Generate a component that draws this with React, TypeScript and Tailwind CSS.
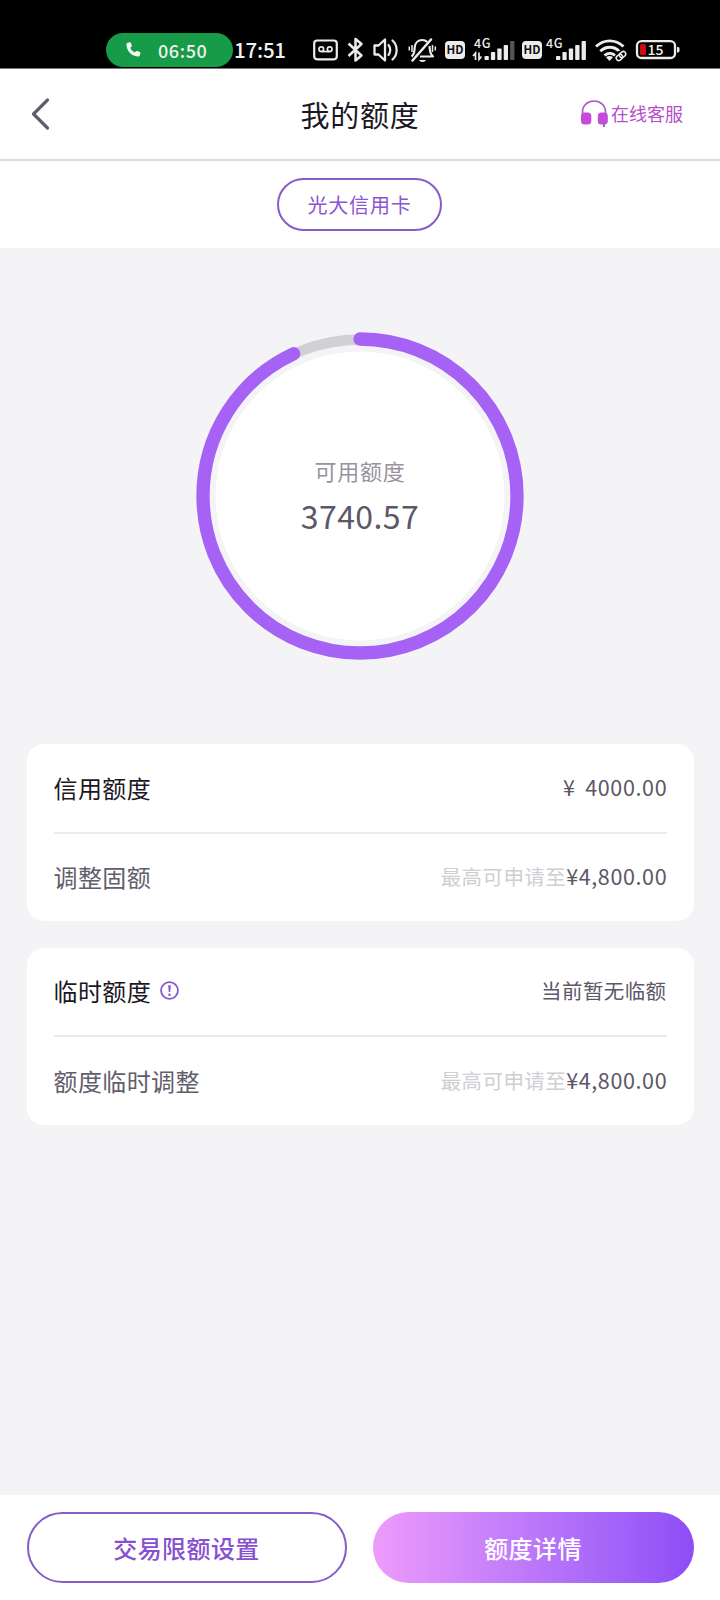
import type { ReactNode } from "react";

function StatusIcon({ x, width, children }: { x: number; width: number; children: ReactNode }) {
  return (
    <svg
      width={width}
      height={34}
      viewBox={`${x} 33 ${width} 34`}
      fill="none"
      stroke="#ececec"
      className="shrink-0"
    >
      {children}
    </svg>
  );
}

function HdBadge({ x }: { x: number }) {
  return (
    <g stroke="none">
      <rect x={x} y={41} width={20} height={18} rx={4} fill="#ececec" />
      <text x={x + 10} y={54.3} fontSize={11.5} fontWeight={700} textAnchor="middle" fill="#111111">
        HD
      </text>
    </g>
  );
}

function Bars({ x, dimLast = false }: { x: number; dimLast?: boolean }) {
  return (
    <g stroke="none">
      {[4, 8, 11.5, 15, 19].map((h, i) => (
        <rect
          key={h}
          x={x + i * 6.4}
          y={60 - h}
          width={4.3}
          height={h}
          rx={0.8}
          fill={dimLast && i === 4 ? "#555555" : "#ececec"}
        />
      ))}
    </g>
  );
}

function StatusBar() {
  return (
    <div className="flex h-[69px] shrink-0 items-start border-b border-[#777] bg-black pt-[33px] pl-[106px] font-['Noto_Sans_CJK_SC','Noto_Sans',sans-serif] text-[#f0f0f0]">
      <div className="flex h-[34px] w-[127px] shrink-0 items-center rounded-full bg-[#169b49]">
        <svg width="15" height="16" viewBox="0 0 14 15" className="ml-[20px]" fill="#f4fff8">
          <path d="M1.2 1 3.3.2c.5-.2 1 .1 1.2.6l.9 2.6c.1.4 0 .8-.3 1L3.9 5.5c.8 1.900 2.200 3.400 4.200 4.400l1.200-1.200c.3-.3.7-.4 1.100-.3l2.500 1c.5.2.800.700.6 1.200l-.8 2.400c-.1.400-.5.700-.9.700C5.300 13.700.2 8.300.4 1.900c0-.4.3-.7.8-.9Z" />
        </svg>
        <span className="ml-[17px] text-[18px] leading-[32px] font-medium tracking-[0.6px] whitespace-nowrap">
          <span className="block -mt-[1px]">06:50</span>
        </span>
      </div>
      <span className="ml-[1px] w-[76px] shrink-0 text-[20.5px] leading-[33px] font-medium tracking-[-0.2px] whitespace-nowrap">
        17:51
      </span>
      <StatusIcon x={310} width={33}>
        <rect x={314.200} y={40.500} width={22.600} height={18.800} rx={3} strokeWidth={2.200} />
        <circle cx={321.300} cy={49.200} r={2.300} strokeWidth={1.700} />
        <circle cx={329.700} cy={49.200} r={2.300} strokeWidth={1.700} />
        <path d="M321.300 51.600h8.400" strokeWidth={1.600} />
      </StatusIcon>
      <StatusIcon x={343} width={26}>
        <path d="m348.500 43.500 13 12-6 5V39l6 5-13 12" strokeWidth={2.500} strokeLinejoin="round" />
      </StatusIcon>
      <StatusIcon x={369} width={34}>
        <path d="M374.500 45.500h4l6.500-6v21l-6.500-6h-4Z" strokeWidth={2.300} strokeLinejoin="round" />
        <path d="M388.500 45c2.300 2.600 2.300 7.400 0 10M392.500 40.500c5.500 5 5.500 14 0 19" strokeWidth={2.200} strokeLinecap="round" />
      </StatusIcon>
      <StatusIcon x={403} width={39}>
        <path d="M411.500 56.500c3-2 3-5 3.200-9 .4-4.500 3.500-7.500 7.500-7.500 2 0 3.800.7 5 2M429.500 46c.2 4.500.5 8.500 3.500 10.500h-13" strokeWidth={2.200} strokeLinejoin="round" />
        <path d="m412.500 60.500 18.500-21" strokeWidth={2.500} strokeLinecap="round" />
        <path d="M419 60h7c-1 2.500-6 2.500-7 0Z" fill="#ececec" stroke="none" />
        <path d="M409.300 46.500v4M412 45v7M432.500 45v7M435.300 46.500v4" strokeWidth={1.500} />
      </StatusIcon>
      <StatusIcon x={442} width={28}>
        <HdBadge x={445} />
      </StatusIcon>
      <StatusIcon x={470} width={48}>
        <text x={474} y={48} fontSize={12.500} fontWeight={500} letterSpacing={0.600} fill="#ececec" stroke="none">4G</text>
        <path d="M475.500 60v-7l-2.500 3M479 52.500v7l2.500-3" strokeWidth={1.700} />
        <Bars x={484.500} dimLast />
      </StatusIcon>
      <StatusIcon x={518} width={26}>
        <HdBadge x={522} />
      </StatusIcon>
      <StatusIcon x={544} width={46}>
        <text x={546} y={48} fontSize={12.500} fontWeight={500} letterSpacing={0.600} fill="#ececec" stroke="none">4G</text>
        <Bars x={556} />
      </StatusIcon>
      <StatusIcon x={590} width={42}>
        <path d="M596 46.500c8-7.500 19.500-7.500 27.500 0M600.300 51.200c5.500-5.200 13.500-5.200 19 0M604.500 55.500c3.200-2.700 7.400-2.700 10.600 0" strokeWidth={2.900} />
        <path d="m606 57.300 3.500 3.700 3.500-3.700c-2-1.700-5-1.700-7 0Z" fill="#ececec" stroke="none" />
        <circle cx={621} cy={56} r={5.500} fill="#000000" stroke="none" />
        <g strokeWidth={1.500} transform="rotate(-42 621 56)">
          <rect x={615.500} y={53.500} width={6.800} height={5} rx={2.500} />
          <rect x={619.700} y={53.500} width={6.800} height={5} rx={2.500} />
        </g>
      </StatusIcon>
      <StatusIcon x={632} width={50}>
        <rect x={637} y={41.200} width={38} height={16.800} rx={4.500} strokeWidth={2.300} />
        <rect x={640} y={44} width={6} height={11} rx={1.500} fill="#c80d12" stroke="none" />
        <path d="M677 47h.8c1 0 1.700.7 1.700 1.700v2c0 1-.7 1.700-1.700 1.700h-.8Z" fill="#ececec" stroke="none" />
        <text x={655.500} y={54.700} fontSize={14} fontWeight={500} textAnchor="middle" fill="#f0f0f0" stroke="none">15</text>
      </StatusIcon>
    </div>
  );
}

function Header() {
  return (
    <header className="grid h-[92px] shrink-0 grid-cols-3 items-center border-b-2 border-[#dadada] bg-white">
      <svg width="20" height="34" viewBox="0 0 20 34" fill="none" className="ml-[30px]">
        <path d="M17.500 3 3.500 17l14 14" stroke="#625d6b" strokeWidth="3.200" strokeLinecap="round" strokeLinejoin="round" />
      </svg>
      <h1 className="text-center text-[29px] leading-[44px] tracking-[0.8px] text-[#1b1724]">我的额度</h1>
      <div className="flex items-center justify-end pr-[37px] pb-[2px] text-[#b44fc8]">
        <svg width="28" height="28" viewBox="0 0 28 28" className="mr-[3px]" fill="#c54bdd">
          <path d="M2.500 15v-2C2.500 6.500 7.500 2 14 2s11.500 4.500 11.500 11v2" fill="none" stroke="#a85cc0" strokeWidth="1.600" />
          <rect x="1" y="13.500" width="10.300" height="12" rx="3.500" />
          <rect x="17.800" y="13.500" width="10" height="12" rx="3.500" />
          <path d="M23 24h2v4h-2Z" fill="#a85cc0" />
        </svg>
        <span className="text-[18px] leading-[28px] whitespace-nowrap">在线客服</span>
      </div>
    </header>
  );
}

function LimitRing() {
  return (
    <div className="grid h-[496px] shrink-0 place-items-center">
      <svg width="330" height="330" viewBox="0 0 330 330" fill="none" className="col-start-1 row-start-1">
        <circle cx="165" cy="165" r="144.500" fill="#ffffff" />
        <circle cx="165" cy="165" r="156.500" stroke="#d2d0d6" strokeWidth="10.500" />
        <circle
          cx="165"
          cy="165"
          r="157"
          stroke="#a661f5"
          strokeWidth="13.300"
          strokeLinecap="round"
          pathLength="360"
          strokeDasharray="335 25"
          transform="rotate(-90 165 165)"
        />
      </svg>
      <div className="z-10 col-start-1 row-start-1 flex flex-col items-center pb-[4px]">
        <span className="text-[22px] leading-[34px] tracking-[0.7px] text-[#97949e]">可用额度</span>
        <span className="mt-[7px] text-[32px] leading-[42px] tracking-[0.400px] text-[#5d5768]">3740.57</span>
      </div>
    </div>
  );
}

function Hint() {
  return (
    <>
      <span className="text-[20.500px] tracking-[0.400px] text-[#d0ced3]">最高可申请至</span>
      <Amount>¥4,800.00</Amount>
    </>
  );
}

function Amount({ children }: { children: ReactNode }) {
  return <span className="-mr-[0.700px] text-[21.500px] tracking-[0.620px]">{children}</span>;
}

function Row({ label, value, strong = false }: { label: ReactNode; value: ReactNode; strong?: boolean }) {
  return (
    <div className="flex flex-1 items-center justify-between">
      <div className={strong ? "flex items-center text-[#1b1724]" : "flex items-center text-[#625d6b]"}>{label}</div>
      <div className="pb-[2px] text-[20.500px] leading-[32px] whitespace-nowrap text-[#5d5768]">{value}</div>
    </div>
  );
}

function Card({ children }: { children: ReactNode }) {
  return (
    <section className="flex h-[177px] flex-col rounded-[17px] bg-white px-[27px] text-[24px] leading-[36px] tracking-[0.400px]">
      {children}
    </section>
  );
}

export default function App() {
  return (
    <div className="flex h-[1600px] w-[720px] flex-col overflow-hidden bg-[#f4f4f6] font-['Noto_Sans_CJK_SC',sans-serif]">
      <StatusBar />
      <Header />
      <div className="flex h-[87px] shrink-0 items-start justify-center bg-white pt-[17px] pr-[1px]">
        <button className="h-[53px] w-[165px] rounded-full border-2 border-[#875bc8] text-[20px] leading-[48px] tracking-[0.800px] text-[#8a56d2]">
          光大信用卡
        </button>
      </div>
      <LimitRing />
      <main className="flex flex-1 flex-col gap-[26.500px] px-[26.500px]">
        <Card>
          <Row strong label="信用额度" value={<Amount>¥&thinsp;&thinsp;4000.00</Amount>} />
          <hr className="border-t-2 border-[#ebebed]" />
          <Row label="调整固额" value={<Hint />} />
        </Card>
        <Card>
          <Row
            strong
            label={
              <>
                临时额度
                <svg width="19" height="19" viewBox="0 0 18 18" fill="none" className="mb-[2px] ml-[9px]">
                  <circle cx="9" cy="9" r="8" stroke="#8a56d2" strokeWidth="1.700" />
                  <path d="M7.700 4h2.600l-.6 6.500H8.300Z" fill="#8a56d2" />
                  <circle cx="9" cy="13" r="1.200" fill="#8a56d2" />
                </svg>
              </>
            }
            value="当前暂无临额"
          />
          <hr className="border-t-2 border-[#ebebed]" />
          <Row label="额度临时调整" value={<Hint />} />
        </Card>
      </main>
      <footer className="flex h-[105px] shrink-0 justify-between bg-white px-[26.500px] pt-[17px] text-[24px] leading-[68px] font-medium tracking-[0.400px]">
        <button className="h-[71px] w-[320px] rounded-full border-2 border-[#875bc8] text-[#8650d0]">交易限额设置</button>
        <button className="h-[71px] w-[321px] rounded-full bg-linear-to-r from-[#ee9bfb] to-[#8e4cf6] text-white">
          额度详情
        </button>
      </footer>
    </div>
  );
}
